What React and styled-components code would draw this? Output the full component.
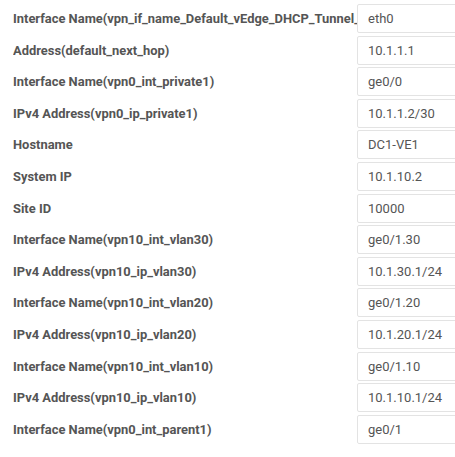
import React from "react";
import styled, { createGlobalStyle } from "styled-components";

const Global = createGlobalStyle`
  html, body { margin: 0; padding: 0; background: #fff; overflow: hidden; }
  body { font-family: Roboto, "Liberation Sans", sans-serif; }
`;

const Form = styled.div`
  padding: 4px 0 0 13px;
  display: grid;
  grid-template-columns: 344px 140px;
  row-gap: 2.6px;
  width: 520px;
`;

const Label = styled.label`
  display: flex;
  align-items: center;
  height: 29px;
  font-size: 12.92px;
  font-weight: 700;
  color: #555;
  white-space: nowrap;
  overflow: hidden;
`;

const Field = styled.input`
  box-sizing: border-box;
  height: 29px;
  width: 100%;
  border: 1px solid #e3e3e3;
  border-radius: 2px;
  padding: 0 10px;
  font-family: Roboto, "Liberation Sans", sans-serif;
  font-size: 13px;
  color: #555;
  background: #fff;
  outline: none;
`;

const rows = [
  ["Interface Name(vpn_if_name_Default_vEdge_DHCP_Tunnel_Interface)", "eth0"],
  ["Address(default_next_hop)", "10.1.1.1"],
  ["Interface Name(vpn0_int_private1)", "ge0/0"],
  ["IPv4 Address(vpn0_ip_private1)", "10.1.1.2/30"],
  ["Hostname", "DC1-VE1"],
  ["System IP", "10.1.10.2"],
  ["Site ID", "10000"],
  ["Interface Name(vpn10_int_vlan30)", "ge0/1.30"],
  ["IPv4 Address(vpn10_ip_vlan30)", "10.1.30.1/24"],
  ["Interface Name(vpn10_int_vlan20)", "ge0/1.20"],
  ["IPv4 Address(vpn10_ip_vlan20)", "10.1.20.1/24"],
  ["Interface Name(vpn10_int_vlan10)", "ge0/1.10"],
  ["IPv4 Address(vpn10_ip_vlan10)", "10.1.10.1/24"],
  ["Interface Name(vpn0_int_parent1)", "ge0/1"],
];

export default function App() {
  return (
    <>
      <Global />
      <Form>
        {rows.map(([l, v]) => (
          <React.Fragment key={l}>
            <Label>{l}</Label>
            <Field defaultValue={v} readOnly />
          </React.Fragment>
        ))}
      </Form>
    </>
  );
}
